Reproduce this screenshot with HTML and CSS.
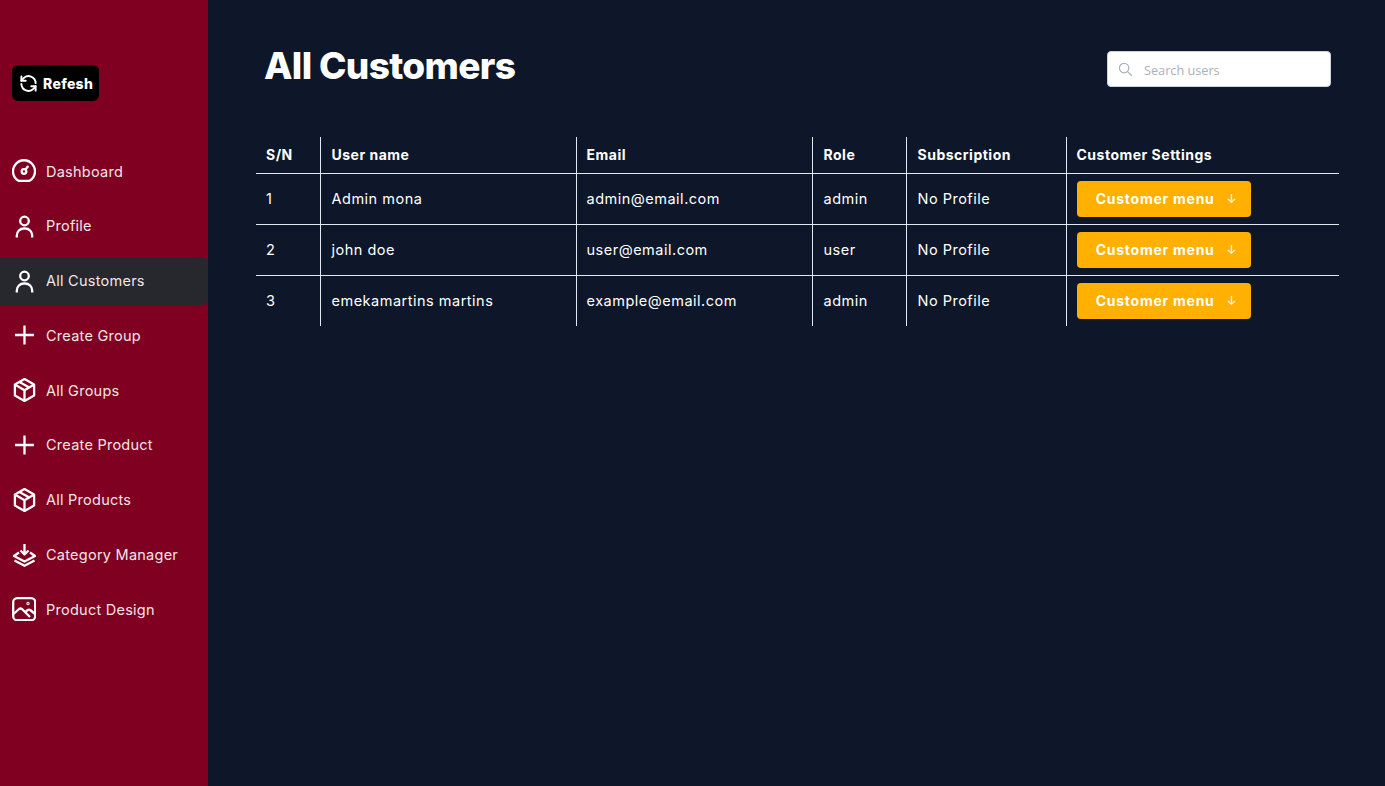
FILE: index.html
```html
<!DOCTYPE html>
<html lang="en">

<head>
    <meta charset="UTF-8">
    <title>All Customers</title>
    <link rel="stylesheet" href="styles.css">
</head>

<body>
    <aside class="sidebar">
        <button class="refresh">
            <svg class="refresh-icon" viewBox="0 0 24 24" fill="none" stroke="#fff" stroke-width="2.400" stroke-linecap="round" stroke-linejoin="round">
                <path d="M21 11.500a9 9 0 0 0-15.500-6L3 8.500"/><path d="M3 3v5.500h5.500"/>
                <path d="M3 12.500a9 9 0 0 0 15.500 6L21 15.500"/><path d="M21 21v-5.500h-5.500"/>
            </svg>
            Refesh
        </button>
        <nav class="menu">
            <a class="menu-item">
                <svg class="icon" viewBox="0 0 24 24"><path d="M6.500 21.800A11 11 0 1 1 17.500 21.800z"/><circle cx="12" cy="12.500" r="2.300"/><path d="M13.500 10.500l2.800-3.500"/></svg>
                Dashboard
            </a>
            <a class="menu-item">
                <svg class="icon" viewBox="0 0 24 24"><circle cx="12.500" cy="7" r="4.300"/><path d="M4.800 23.500v-2a7 7 0 0 1 7-7h1.400a7 7 0 0 1 7 7v2"/></svg>
                Profile
            </a>
            <a class="menu-item active">
                <svg class="icon" viewBox="0 0 24 24"><circle cx="12.500" cy="7" r="4.300"/><path d="M4.800 23.500v-2a7 7 0 0 1 7-7h1.400a7 7 0 0 1 7 7v2"/></svg>
                All Customers
            </a>
            <a class="menu-item">
                <svg class="icon" viewBox="0 0 24 24"><path d="M12.500 2.500v19M3 12h19"/></svg>
                Create Group
            </a>
            <a class="menu-item">
                <svg class="icon" viewBox="0 0 24 24"><path d="M12.500 1l9.600 5.600v11L12.500 23l-9.600-5.400v-11z"/><path d="M2.900 6.600l9.600 5.600 9.600-5.600M12.500 12.200V23M7.500 3.900l9.800 5.500"/></svg>
                All Groups
            </a>
            <a class="menu-item">
                <svg class="icon" viewBox="0 0 24 24"><path d="M12.500 2.500v19M3 12h19"/></svg>
                Create Product
            </a>
            <a class="menu-item">
                <svg class="icon" viewBox="0 0 24 24"><path d="M12.500 1l9.600 5.600v11L12.500 23l-9.600-5.400v-11z"/><path d="M2.900 6.600l9.600 5.600 9.600-5.600M12.500 12.200V23M7.500 3.900l9.800 5.500"/></svg>
                All Products
            </a>
            <a class="menu-item">
                <svg class="icon" viewBox="0 0 24 24"><path d="M12.500 1v10M8.500 7.500l4 4 4-4"/><path d="M7 9.500l-5 3.500 10.500 5.500L23 13l-5-3.500"/><path d="M2.500 17.500l10 5.300 10-5.300"/></svg>
                Category Manager
            </a>
            <a class="menu-item">
                <svg class="icon" viewBox="0 0 24 24"><rect x="1.200" y="1.200" width="22" height="22" rx="4"/><path d="M1.500 17l5.500-5q1.500-1 3 0l8 8"/><path d="M13.800 14.500l2-1.500q1.200-.8 2.400 0l4.800 4"/><circle cx="16" cy="6.500" r=".5"/></svg>
                Product Design
            </a>
        </nav>
    </aside>

    <main class="content">
        <header class="top">
            <h1>All Customers</h1>
            <div class="search">
                <svg class="search-icon" viewBox="0 0 16 16" fill="none" stroke="#a9b1bd" stroke-width="1.300"><circle cx="6.500" cy="6.500" r="5"/><path d="M10.200 10.200l4.500 4.500"/></svg>
                <span>Search users</span>
            </div>
        </header>

        <table class="customers">
            <thead>
                <tr>
                    <th class="col-sn">S/N</th>
                    <th class="col-name">User name</th>
                    <th class="col-email">Email</th>
                    <th class="col-role">Role</th>
                    <th class="col-sub">Subscription</th>
                    <th>Customer Settings</th>
                </tr>
            </thead>
            <tbody>
                <tr>
                    <td>1</td>
                    <td>Admin mona</td>
                    <td>admin@email.com</td>
                    <td>admin</td>
                    <td>No Profile</td>
                    <td><button class="menu-btn">Customer menu <span class="arrow">↓</span></button></td>
                </tr>
                <tr>
                    <td>2</td>
                    <td>john doe</td>
                    <td>user@email.com</td>
                    <td>user</td>
                    <td>No Profile</td>
                    <td><button class="menu-btn">Customer menu <span class="arrow">↓</span></button></td>
                </tr>
                <tr>
                    <td>3</td>
                    <td>emekamartins martins</td>
                    <td>example@email.com</td>
                    <td>admin</td>
                    <td>No Profile</td>
                    <td><button class="menu-btn">Customer menu <span class="arrow">↓</span></button></td>
                </tr>
            </tbody>
        </table>
    </main>
</body>

</html>
```

FILE: styles.css
```css
* {
    box-sizing: border-box;
}

body {
    margin: 0;
    height: 786px;
    overflow: hidden;
    display: flex;
    font-family: Inter, "Open Sans", sans-serif;
    background-color: #0e1729;
    color: #fff;
}

.sidebar {
    width: 208px;
    flex-shrink: 0;
    background-color: #7f0020;
    padding-top: 65px;
}

.refresh {
    display: flex;
    align-items: center;
    gap: 5px;
    margin-left: 12px;
    width: 87px;
    height: 36px;
    padding: 0 0 0 7px;
    border: none;
    border-radius: 6px;
    background-color: #000;
    color: #fff;
    font-family: inherit;
    font-size: 14px;
    font-weight: 800;
    letter-spacing: 0.3px;
}

.refresh-icon {
    width: 19px;
    height: 19px;
}

.menu {
    margin-top: 46px;
}

.menu-item {
    display: flex;
    align-items: center;
    gap: 10px;
    height: 48px;
    margin-bottom: 6.800px;
    padding-left: 12px;
    font-size: 14.500px;
    letter-spacing: 0.25px;
    color: #f3e4e8;
}

.menu-item.active {
    background-color: #26282d;
    border-radius: 0 6px 6px 0;
}

.icon {
    width: 24px;
    height: 24px;
    flex-shrink: 0;
    fill: none;
    stroke: #fff;
    stroke-width: 2.300;
    stroke-linejoin: round;
}

.content {
    flex: 1;
    padding: 0 46px 0 48px;
}

.top {
    display: flex;
    justify-content: space-between;
    align-items: flex-start;
    height: 137px;
    padding: 43px 8px 0 8px;
}

h1 {
    margin: 0;
    font-size: 37px;
    line-height: 45px;
    font-weight: 800;
    letter-spacing: -0.65px;
}

.search {
    display: flex;
    align-items: center;
    gap: 11px;
    width: 224px;
    height: 36px;
    margin-top: 8px;
    padding: 1px 0 0 10px;
    background-color: #fff;
    border: 1px solid #cbd5e0;
    border-radius: 4px;
    font-family: "Open Sans", sans-serif;
    font-size: 12.700px;
    color: #a9b1bd;
}

.search-icon {
    width: 15px;
    height: 15px;
}

.customers {
    width: 1083px;
    border-collapse: collapse;
    font-size: 14.500px;
    letter-spacing: 0.5px;
}

.customers th,
.customers td {
    padding: 0 10px;
    text-align: left;
    border-left: 1px solid #e2e8f0;
    border-bottom: 1px solid #e2e8f0;
}

.customers th:first-child,
.customers td:first-child {
    border-left: none;
}

.customers th:nth-child(2),
.customers td:nth-child(2),
.customers th:nth-child(4),
.customers td:nth-child(4),
.customers th:nth-child(5),
.customers td:nth-child(5) {
    padding-left: 11px;
}

.customers tbody tr:last-child td {
    border-bottom: none;
}

.customers th {
    height: 36px;
    font-size: 14px;
    font-weight: 700;
}

.customers td {
    height: 51px;
}

.col-sn {
    width: 64px;
}

.col-name {
    width: 256px;
}

.col-email {
    width: 236px;
}

.col-role {
    width: 94px;
}

.col-sub {
    width: 160px;
}

.menu-btn {
    display: flex;
    align-items: center;
    justify-content: center;
    gap: 12px;
    width: 174px;
    height: 36px;
    padding: 0 0 0 6px;
    border: none;
    border-radius: 4px;
    background-color: #ffb000;
    color: #fff;
    font-family: inherit;
    font-size: 14px;
    font-weight: 700;
    letter-spacing: 0.75px;
}

.arrow {
    font-size: 12px;
    font-weight: 400;
}
```
